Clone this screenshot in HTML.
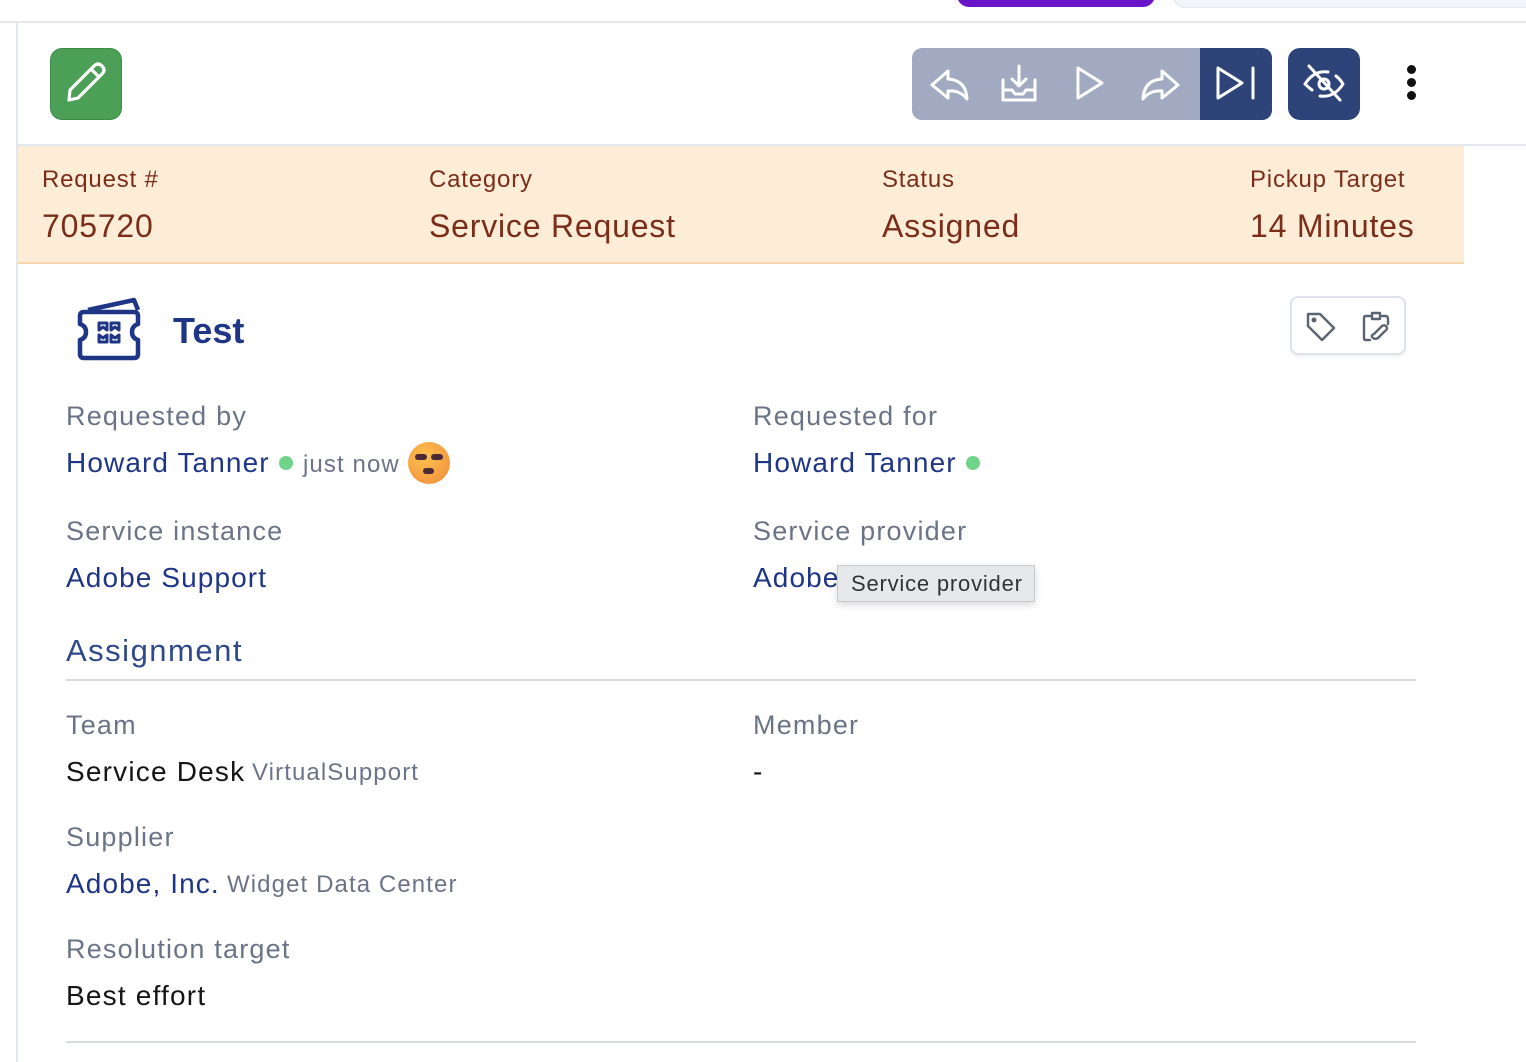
<!DOCTYPE html>
<html><head><meta charset="utf-8">
<style>
*{margin:0;padding:0;box-sizing:border-box}
html,body{width:1526px;height:1062px;overflow:hidden;background:#fff;font-family:"Liberation Sans",sans-serif}
.a{position:absolute;line-height:1;white-space:nowrap}
.lb{font-size:27px;color:#6b7487;letter-spacing:1.2px}
.lk{font-size:28px;color:#1f3585;letter-spacing:1.1px}
.bk{font-size:28px;color:#151515;letter-spacing:1.2px}
.sm{font-size:24px;color:#6b7487;letter-spacing:1.1px}
.bl{font-size:24px;color:#7a2e1a;letter-spacing:0.8px}
.bv{font-size:32px;color:#7a2e1a;letter-spacing:0.8px}
.dot{position:absolute;width:14px;height:14px;border-radius:50%;background:#6fd38a}
</style></head><body>
<div class="a" style="left:957px;top:-20px;width:198px;height:27px;border-radius:12px;background:#6a14c9"></div>
<div class="a" style="left:1173px;top:-20px;width:400px;height:28px;border-radius:12px;background:#f1f4f8;border:1px solid #e3e7ee"></div>
<div class="a" style="left:0;top:21px;width:1526px;height:2px;background:#e6e8ee"></div>
<div class="a" style="left:16px;top:22px;width:2px;height:1040px;background:#e3e7f0"></div>
<div class="a" style="left:18px;top:144px;width:1508px;height:2px;background:#e3e7f0"></div>

<div class="a" style="left:50px;top:48px;width:72px;height:72px;border-radius:12px;background:#4c9f56;border:1px solid #3f8a49">
<svg width="72" height="72" viewBox="0 0 72 72" style="position:absolute;left:-1px;top:-1px"><path d="M19 52 L20 42 L44 18 Q48 14 52 18 Q56 22 52 26 L28 50 Z M41 21 L49 29" fill="none" stroke="#fff" stroke-width="3.2" stroke-linejoin="round"/></svg></div>

<div class="a" style="left:912px;top:48px;width:360px;height:72px;border-radius:10px;background:#a1aac0;overflow:hidden">
<div class="a" style="left:288px;top:0;width:72px;height:72px;background:#2e4479"></div>
<svg width="360" height="72" viewBox="0 0 360 72" style="position:absolute;left:0;top:0" fill="none" stroke="#fff" stroke-width="3" stroke-linejoin="round" stroke-linecap="round">
<path d="M36 23 L20 37 L36 50 L36 43 Q48 42 55 51 Q54 32 36 31 Z"/>
<path d="M107 18 L107 37 M100 31 L107 38 L114 31 M91 32 L91 52 L123 52 L123 32 M91 42 L100 42 L103 46 L111 46 L114 42 L123 42"/>
<path d="M166 20 L190 35 L166 50 Z"/>
<path d="M250 23 L266 37 L250 50 L250 43 Q238 42 231 51 Q232 32 250 31 Z"/>
<path d="M306 20 L330 35 L306 50 Z M341 20 L341 50"/>
</svg></div>
<div class="a" style="left:1288px;top:48px;width:72px;height:72px;border-radius:12px;background:#2e4479">
<svg width="72" height="72" viewBox="0 0 72 72" fill="none" stroke="#fff" stroke-width="3" stroke-linecap="round" stroke-linejoin="round" style="position:absolute;left:0;top:0"><path d="M17 36 Q26 22 40 24 M48 28 Q52 31 55 36 Q46 50 32 48 M24 42 Q20 39 17 36"/><circle cx="36" cy="36" r="5"/><path d="M21 18 L52 52"/></svg></div>
<div class="a" style="left:1407px;top:65px;width:9px;height:9px;border-radius:50%;background:#111"></div>
<div class="a" style="left:1407px;top:78px;width:9px;height:9px;border-radius:50%;background:#111"></div>
<div class="a" style="left:1407px;top:91px;width:9px;height:9px;border-radius:50%;background:#111"></div>

<div class="a" style="left:18px;top:146px;width:1446px;height:118px;background:#fdedd6;border-bottom:2px solid #f5d6ae"></div>
<div class="a bl" style="left:42px;top:168px">Request #</div>
<div class="a bv" style="left:42px;top:210px">705720</div>
<div class="a bl" style="left:429px;top:168px">Category</div>
<div class="a bv" style="left:429px;top:210px">Service Request</div>
<div class="a bl" style="left:882px;top:168px">Status</div>
<div class="a bv" style="left:882px;top:210px">Assigned</div>
<div class="a bl" style="left:1250px;top:168px">Pickup Target</div>
<div class="a bv" style="left:1250px;top:210px">14 Minutes</div>

<svg class="a" style="left:76px;top:296px" width="68" height="66" viewBox="0 0 68 66" fill="none" stroke="#1f3585" stroke-width="4.5" stroke-linejoin="round">
<path d="M12 14 L58 4 L62 14"/>
<path d="M8 16 L58 16 Q62 16 62 20 L62 28 Q56 30 56 36 Q56 42 62 44 L62 58 Q62 62 58 62 L8 62 Q4 62 4 58 L4 44 Q10 42 10 36 Q10 30 4 28 L4 20 Q4 16 8 16 Z"/>
<path d="M23 27 L31 27 L31 34 L27 31 L23 34 Z M35 27 L43 27 L43 34 L39 31 L35 34 Z M23 46 L31 46 L31 39 L27 42 L23 39 Z M35 46 L43 46 L43 39 L39 42 L35 39 Z" stroke-width="3"/>
</svg>
<div class="a" style="left:173px;top:313px;font-size:36px;font-weight:bold;color:#1f3585">Test</div>

<div class="a" style="left:1290px;top:296px;width:116px;height:59px;border:2px solid #dde1ea;border-radius:8px;background:#fff;box-shadow:0 2px 4px rgba(0,0,0,.06)">
<svg width="116" height="59" viewBox="0 0 116 59" fill="none" stroke="#5b6472" stroke-width="2.4" stroke-linejoin="round" stroke-linecap="round" style="position:absolute;left:-2px;top:-2px">
<path d="M18 18 L18 30 L32 44 L44 32 L30 18 Z"/><circle cx="24" cy="24" r="1.3" fill="#5b6472"/>
<path d="M80 20 L76 20 Q74 20 74 22 L74 42 Q74 44 76 44 L80 44 M92 20 L96 20 Q98 20 98 24 L98 28 M82 17 L90 17 L90 23 L82 23 Z M84 38 L92 30 Q96 28 97 32 Q97 34 94 36 L88 42 Q84 44 82 41 Q81 39 84 38"/>
</svg></div>

<div class="a lb" style="left:66px;top:403px">Requested by</div>
<div class="a lk" style="left:66px;top:449px">Howard Tanner</div>
<div class="dot" style="left:279px;top:456px"></div>
<div class="a sm" style="left:303px;top:453px">just now</div>
<div class="a" style="left:408px;top:442px;width:42px;height:42px;border-radius:50%;background:radial-gradient(circle at 40% 35%,#fcc14f,#f08a3a)"></div>
<div class="a" style="left:415px;top:454px;width:12px;height:6px;border-radius:3px;background:#4a2a36"></div>
<div class="a" style="left:431px;top:454px;width:12px;height:6px;border-radius:3px;background:#4a2a36"></div>
<div class="a" style="left:423px;top:468px;width:11px;height:6px;border-radius:3px;background:#4a2a36"></div>

<div class="a lb" style="left:753px;top:403px">Requested for</div>
<div class="a lk" style="left:753px;top:449px">Howard Tanner</div>
<div class="dot" style="left:966px;top:456px"></div>

<div class="a lb" style="left:66px;top:518px">Service instance</div>
<div class="a lk" style="left:66px;top:564px">Adobe Support</div>
<div class="a lb" style="left:753px;top:518px">Service provider</div>
<div class="a lk" style="left:753px;top:564px">Adobe Support</div>
<div class="a" style="left:837px;top:565px;width:198px;height:37px;background:#e7e8ea;border:1px solid #c9cbcf;box-shadow:0 3px 8px rgba(0,0,0,.15);font-size:22px;color:#333;padding:7px 0 0 13px;line-height:1;letter-spacing:0.8px">Service provider</div>

<div class="a" style="left:66px;top:635px;font-size:31px;color:#2f4a8a;letter-spacing:1.5px">Assignment</div>
<div class="a" style="left:66px;top:679px;width:1350px;height:2px;background:#d8dbe2"></div>

<div class="a lb" style="left:66px;top:712px">Team</div>
<div class="a bk" style="left:66px;top:758px">Service Desk</div>
<div class="a sm" style="left:252px;top:761px">VirtualSupport</div>
<div class="a lb" style="left:753px;top:712px">Member</div>
<div class="a bk" style="left:753px;top:758px">-</div>

<div class="a lb" style="left:66px;top:824px">Supplier</div>
<div class="a lk" style="left:66px;top:870px">Adobe, Inc.</div>
<div class="a sm" style="left:227px;top:873px">Widget Data Center</div>

<div class="a lb" style="left:66px;top:936px">Resolution target</div>
<div class="a bk" style="left:66px;top:982px">Best effort</div>
<div class="a" style="left:66px;top:1041px;width:1350px;height:2px;background:#d8dbe2"></div>
</body></html>
